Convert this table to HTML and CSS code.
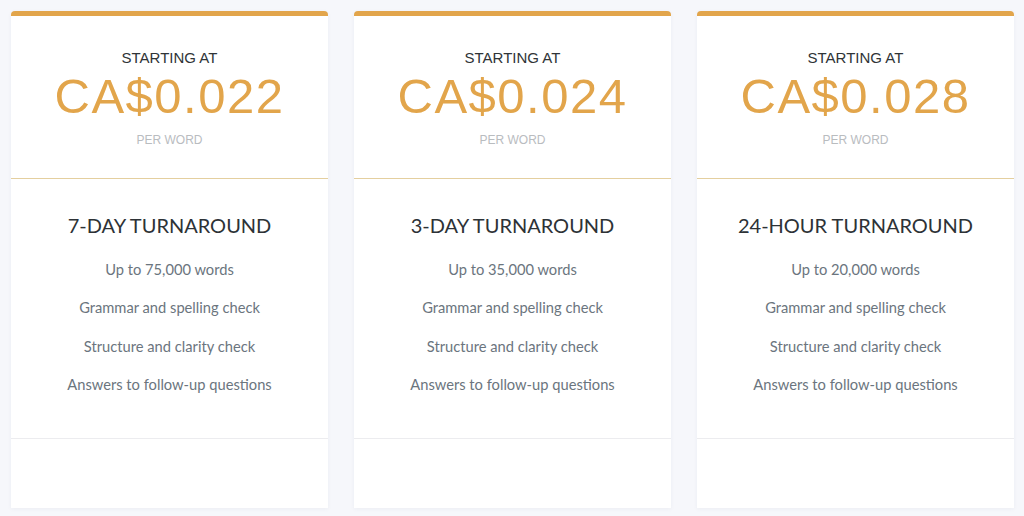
FILE: index.html
```html
<!DOCTYPE html>
<html lang="en">
<head>
<meta charset="utf-8">
<title>Pricing</title>
<link rel="stylesheet" href="styles.css">
</head>
<body>
<div class="plans">
  <div class="card">
    <div class="card-head">
      <div class="starting">STARTING AT</div>
      <div class="price">CA$0.022</div>
      <div class="per">PER WORD</div>
    </div>
    <div class="card-body">
      <h3 class="title">7-DAY TURNAROUND</h3>
      <ul class="features">
        <li>Up to 75,000 words</li>
        <li>Grammar and spelling check</li>
        <li>Structure and clarity check</li>
        <li>Answers to follow-up questions</li>
      </ul>
    </div>
    <div class="card-foot"></div>
  </div>
  <div class="card">
    <div class="card-head">
      <div class="starting">STARTING AT</div>
      <div class="price">CA$0.024</div>
      <div class="per">PER WORD</div>
    </div>
    <div class="card-body">
      <h3 class="title">3-DAY TURNAROUND</h3>
      <ul class="features">
        <li>Up to 35,000 words</li>
        <li>Grammar and spelling check</li>
        <li>Structure and clarity check</li>
        <li>Answers to follow-up questions</li>
      </ul>
    </div>
    <div class="card-foot"></div>
  </div>
  <div class="card">
    <div class="card-head">
      <div class="starting">STARTING AT</div>
      <div class="price">CA$0.028</div>
      <div class="per">PER WORD</div>
    </div>
    <div class="card-body">
      <h3 class="title">24-HOUR TURNAROUND</h3>
      <ul class="features">
        <li>Up to 20,000 words</li>
        <li>Grammar and spelling check</li>
        <li>Structure and clarity check</li>
        <li>Answers to follow-up questions</li>
      </ul>
    </div>
    <div class="card-foot"></div>
  </div>
</div>
</body>
</html>
```

FILE: styles.css
```css
html, body {
  margin: 0;
  padding: 0;
}
body {
  background: #f6f7fb;
  font-family: "Lato", "Liberation Sans", sans-serif;
  width: 1024px;
  height: 516px;
  overflow: hidden;
}
.plans {
  display: flex;
  gap: 26px;
  padding: 11px 10px 8px 11px;
}
.card {
  width: 317px;
  height: 497px;
  background: #ffffff;
  border-top: 5px solid #e2a54b;
  border-radius: 4px 4px 0 0;
  box-sizing: border-box;
  box-shadow: 0 1px 4px rgba(40, 60, 100, 0.05);
  display: flex;
  flex-direction: column;
}
.card-head {
  text-align: center;
  padding: 32px 0 29px;
  border-bottom: 1px solid #e4cf9f;
}
.starting {
  font-family: "Liberation Sans", Arial, sans-serif;
  font-size: 15px;
  line-height: 20px;
  color: #2f3437;
}
.price {
  font-family: "Liberation Sans", Arial, sans-serif;
  font-size: 49px;
  line-height: 52px;
  letter-spacing: 1.5px;
  color: #e2a54b;
  margin-top: 2px;
}
.per {
  font-family: "Liberation Sans", Arial, sans-serif;
  font-size: 12px;
  line-height: 18px;
  color: #b9bcbf;
  margin-top: 9px;
}
.card-body {
  text-align: center;
  padding: 33px 0 44px;
  border-bottom: 1px solid #ececef;
}
.title {
  margin: 0;
  font-size: 20px;
  line-height: 26px;
  font-weight: 400;
  color: #2d3236;
}
.features {
  list-style: none;
  margin: 21px 0 0;
  padding: 0;
}
.features li {
  font-size: 14.7px;
  line-height: 20px;
  color: #6b757e;
  margin-top: 18.4px;
}
.features li:first-child {
  margin-top: 0;
}
.card-foot {
  flex: 1;
}
```
